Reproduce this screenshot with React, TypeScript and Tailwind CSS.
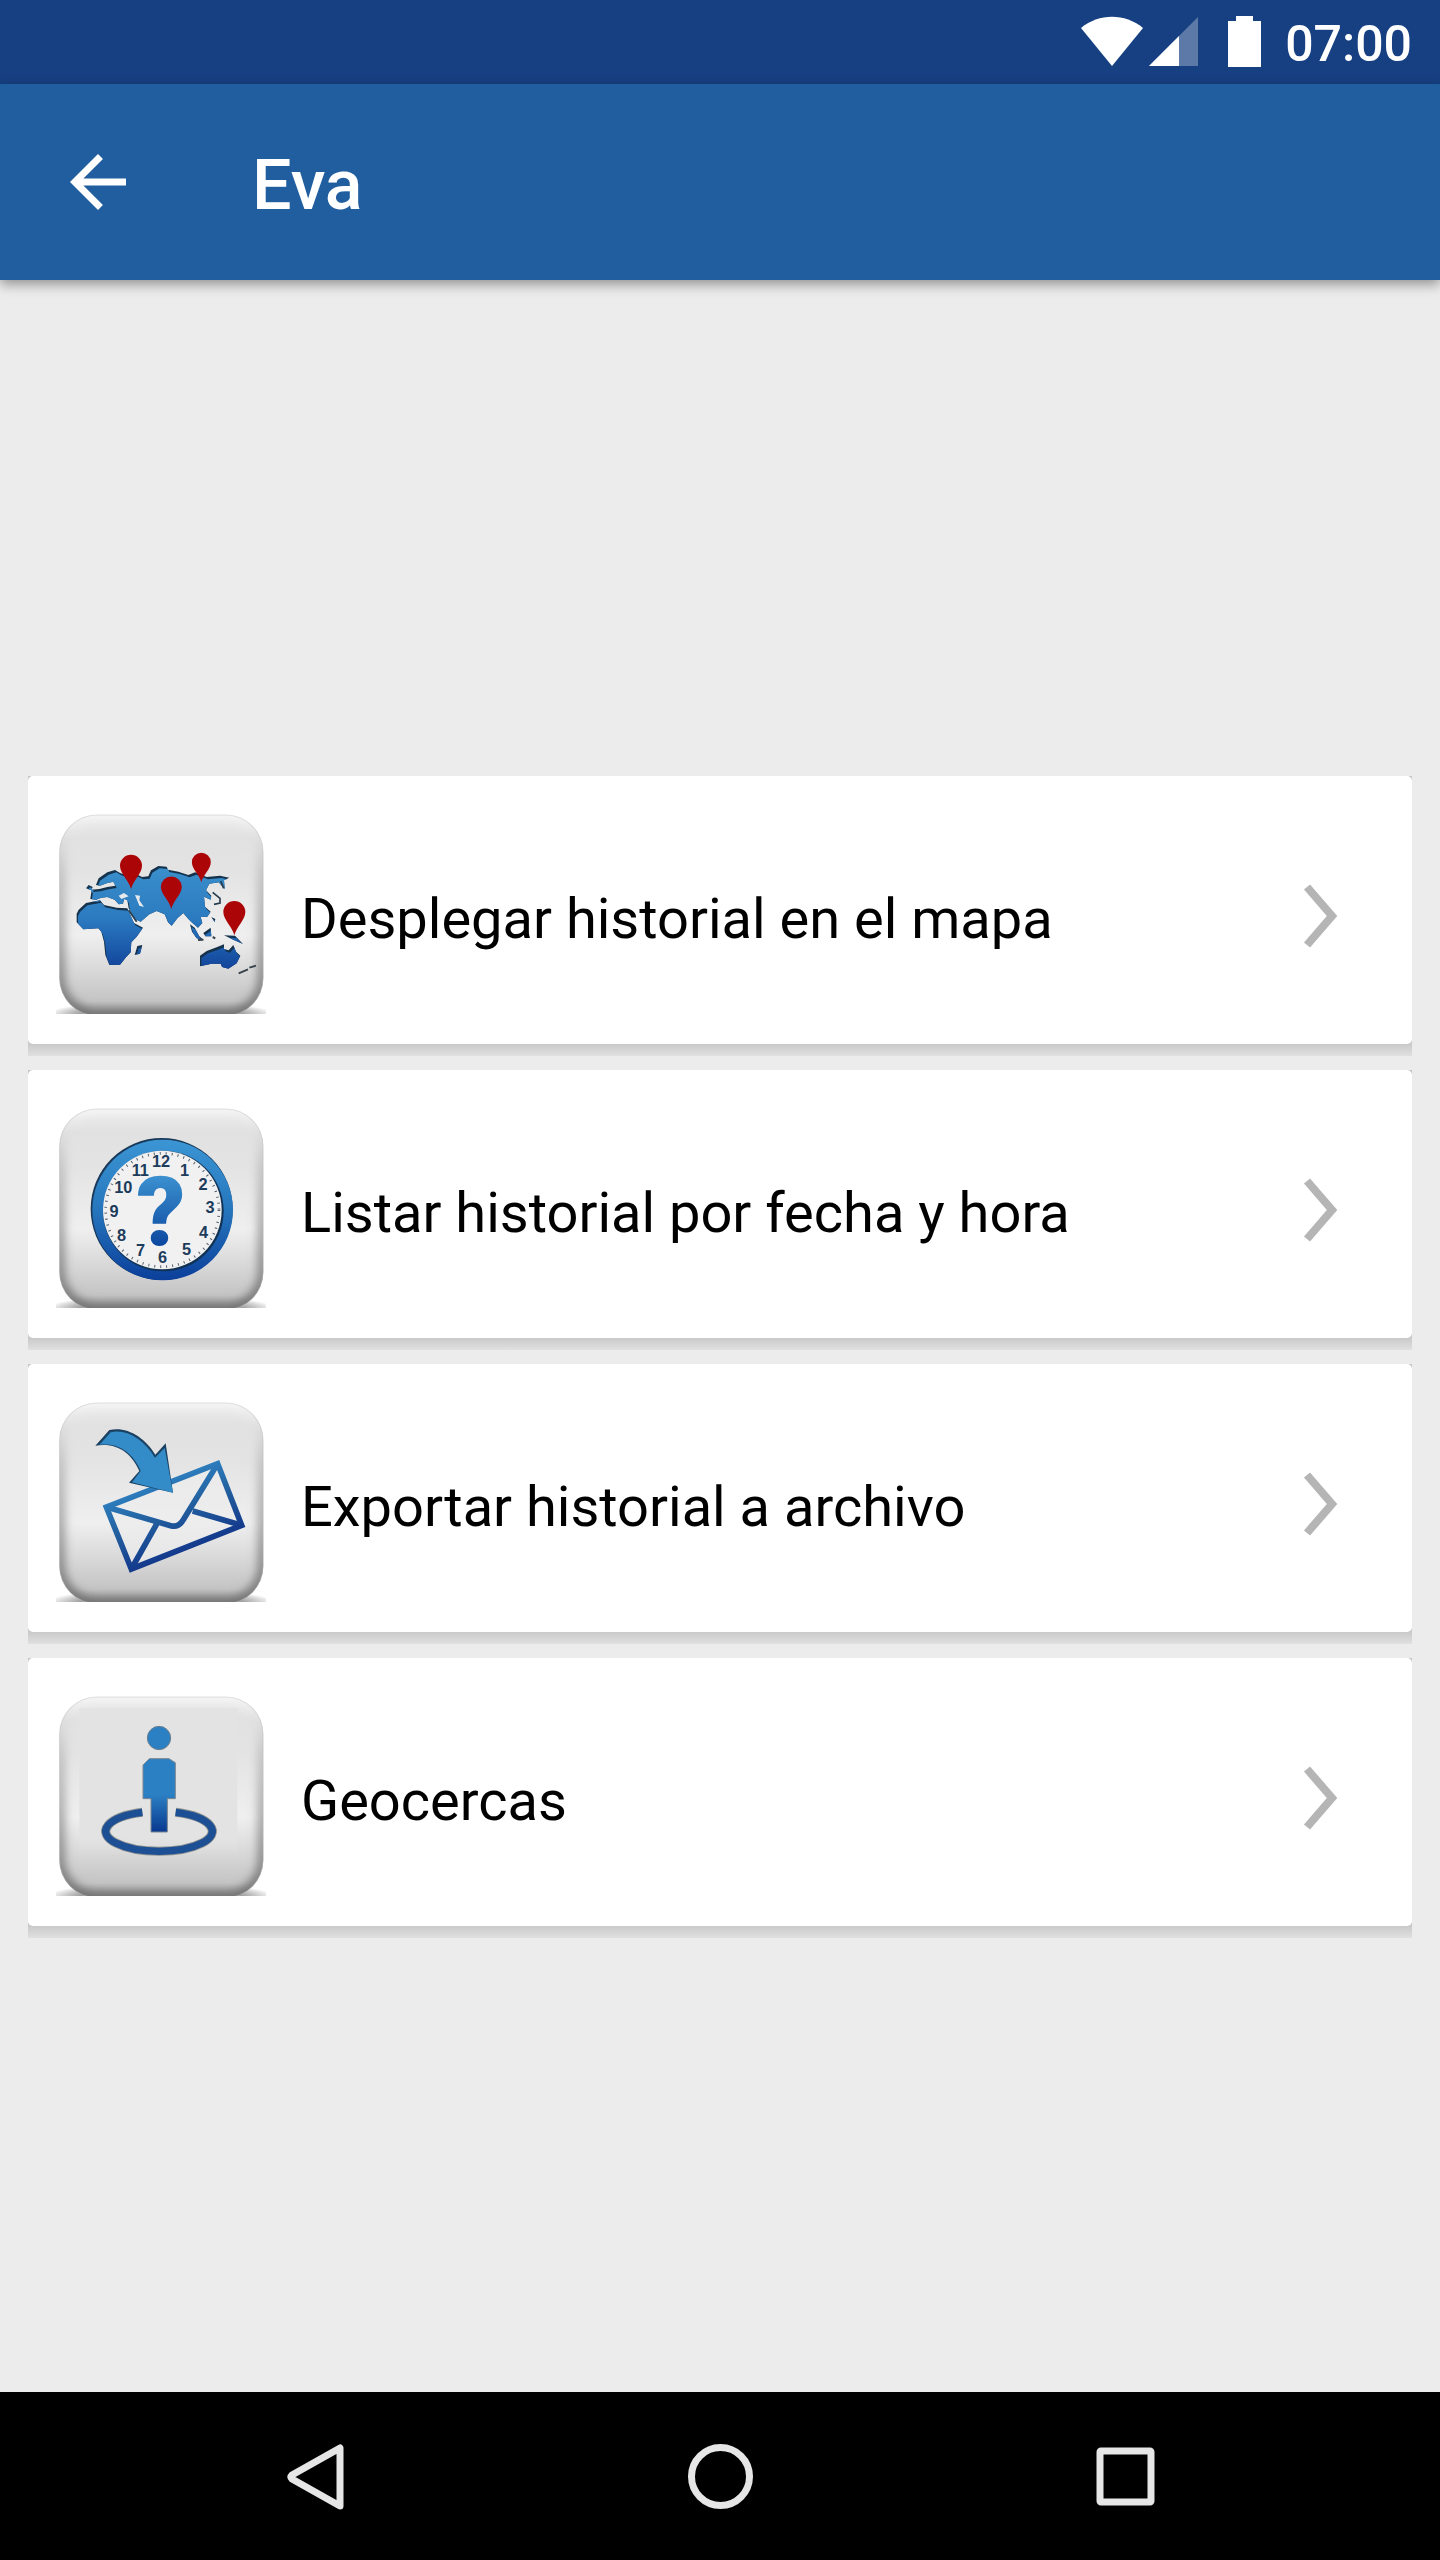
import type { ReactNode } from 'react';

// one pin, the tip is at 0,0
const Pin = ({ x, y, scale = 1 }: { x: number; y: number; scale?: number }) => (
    <path
        transform={`translate(${x} ${y}) scale(${scale})`}
        d="M0 0 C-6 -26 -33 -46 -33 -70 A33 33 0 1 1 33 -70 C33 -46 6 -26 0 0Z"
        fill="#ab0508"
    />
);

const land = [
    // europe + asia
    'M211 402 L215 374 L238 372 L262 366 L286 362 L280 350 L262 354 L240 362 L228 360 L236 340 L262 322 L285 315 L300 324 L318 330 L350 328 L366 336 L385 334 L393 316 L415 303 L440 305 L444 314 L475 320 L505 330 L525 322 L560 336 L600 332 L628 338 L612 346 L614 372 L596 352 L568 356 L558 376 L574 392 L572 404 L552 395 L555 425 L572 440 L562 455 L542 456 L547 474 L534 488 L515 472 L505 462 L490 444 L472 460 L455 482 L444 472 L434 448 L410 438 L388 448 L362 470 L345 462 L326 430 L322 405 L312 402 L309 416 L296 418 L284 404 L262 396 L244 398 L228 404 Z',
    // africa
    'M176 434 L198 414 L240 406 L252 420 L290 428 L322 430 L342 474 L369 488 L350 515 L334 532 L332 562 L318 577 L300 599 L268 600 L256 570 L252 530 L244 500 L235 490 L190 493 L170 472 L170 446 Z',
    'M352 543 L367 540 L360 566 L344 570 Z',
    // britain
    'M198 370 L206 360 L218 366 L214 376 Z',
    // australia
    'M540 572 L560 558 L590 547 L612 538 L612 552 L626 556 L640 540 L648 560 L661 572 L650 595 L625 611 L606 606 L602 596 L575 596 L540 604 Z',
    // islands
    'M510 478 L524 488 L538 514 L552 526 L530 520 L516 500 Z',
    'M550 504 L572 488 L574 514 L556 514 Z',
    'M574 456 L586 462 L584 472 Z',
    'M612 511 L645 512 L669 537 L640 524 Z',
].join(' ');

const WorldGlyph = () => (
    <g transform="translate(-108 -117)">
        <defs>
            <linearGradient id="worldBlue" gradientUnits="userSpaceOnUse" x1="0" y1="300" x2="0" y2="610">
                <stop offset="0" stopColor="#3a8fcb" />
                <stop offset="0.5" stopColor="#2b7ac0" />
                <stop offset="1" stopColor="#10429a" />
            </linearGradient>
            <clipPath id="worldClip"><path d={land} /></clipPath>
        </defs>
        <path d={land} fill="#14324c" />
        <g clipPath="url(#worldClip)">
            <path d={land} fill="url(#worldBlue)" transform="translate(4 7)" />
        </g>
        <path d="M345 390 L360 392 L358 406 L372 426 L358 422 Z M296 392 L312 384 L326 394 L304 402 Z" fill="#e6e9ec" />
        <path d="M326 436 L350 470 M578 382 L600 400 L600 414 L582 418 M602 348 L611 370" fill="none" stroke="#2a3d4e" strokeWidth="5" />
        <path d="M534 525 L550 524 M578 516 L586 520 M656 625 L684 613 M688 608 L708 602" fill="none" stroke="#3a444e" strokeWidth="6" />
        <Pin x={333} y={372} />
        <Pin x={544} y={352} scale={0.86} />
        <Pin x={454} y={432} scale={0.95} />
        <Pin x={643} y={511} />
    </g>
);

const clockNumbers: [string, number, number][] = [
    ['12', 363, 305], ['1', 434, 330], ['2', 489, 374], ['3', 510, 442],
    ['4', 491, 517], ['5', 440, 568], ['6', 368, 592], ['7', 302, 571],
    ['8', 245, 525], ['9', 222, 454], ['10', 250, 381], ['11', 301, 330],
];

const ClockGlyph = () => (
    <g transform="translate(-48 -114)">
        <defs>
            <linearGradient id="clockBlue" gradientUnits="userSpaceOnUse" x1="0" y1="240" x2="0" y2="660">
                <stop offset="0" stopColor="#3b95d3" />
                <stop offset="0.5" stopColor="#2676bd" />
                <stop offset="1" stopColor="#0b3f9b" />
            </linearGradient>
            <linearGradient id="questionBlue" gradientUnits="userSpaceOnUse" x1="0" y1="340" x2="0" y2="560">
                <stop offset="0" stopColor="#3d93d1" />
                <stop offset="1" stopColor="#0b469f" />
            </linearGradient>
        </defs>
        <circle cx="365" cy="447" r="213" fill="#18395a" />
        <circle cx="368" cy="450" r="211" fill="url(#clockBlue)" />
        <circle cx="370" cy="453" r="181" fill="#123254" />
        <circle cx="367" cy="450" r="178" fill="#f1f1f2" />
        <circle cx="367" cy="450" r="170" fill="none" stroke="#55606b" strokeWidth="8" strokeDasharray="3 15" />
        <g fontFamily="'Liberation Sans', sans-serif" fontWeight="700" fontSize="49" fill="#1d3c5c" textAnchor="middle">
            {clockNumbers.map(([n, x, y]) => <text key={n} x={x} y={y + 17}>{n}</text>)}
        </g>
        <text x="363" y="554" textAnchor="middle" fontFamily="Roboto, sans-serif" fontWeight="900" fontSize="288" fill="url(#questionBlue)">?</text>
    </g>
);

const MailGlyph = () => (
    <g transform="translate(-48 -126)">
        <defs>
            <linearGradient id="mailBlue" gradientUnits="userSpaceOnUse" x1="330" y1="360" x2="430" y2="620">
                <stop offset="0" stopColor="#318acb" />
                <stop offset="0.5" stopColor="#23609f" />
                <stop offset="1" stopColor="#12358a" />
            </linearGradient>
        </defs>
        <path d="M533 341 L605 526 L274 657 L199 471 Z" fill="#ececec" fillOpacity="0.7" stroke="url(#mailBlue)" strokeWidth="17" />
        <path d="M199 471 L392 527 Q416 534 430 509 L533 341 M350 522 L274 657 M458 483 L605 526" fill="none" stroke="url(#mailBlue)" strokeWidth="17" />
        <path d="M166 287 L208 240 C260 228 315 262 346 314 L377 280 L399 428 L267 398 L298 363 C275 310 232 276 166 287Z" fill="#1b4263" />
        <path d="M178 285 L212 247 C260 236 310 268 345 323 L374 294 L399 428 L276 397 L302 363 C280 310 236 276 178 285Z" fill="#338bc8" />
    </g>
);

const FenceGlyph = () => (
    <g transform="translate(-48 -138)">
        <defs>
            <linearGradient id="legBlue" gradientUnits="userSpaceOnUse" x1="0" y1="465" x2="0" y2="577">
                <stop offset="0" stopColor="#2b7fc3" />
                <stop offset="1" stopColor="#08388f" />
            </linearGradient>
            <linearGradient id="fenceFace" x1="0" y1="0" x2="0" y2="1">
                <stop offset="0.85" stopColor="#e3e3e3" />
                <stop offset="1" stopColor="#e3e3e3" stopOpacity="0" />
            </linearGradient>
        </defs>
        <rect x="118" y="205" width="474" height="440" fill="url(#fenceFace)" />
        <circle cx="357" cy="294" r="35" fill="#2b7fc3" stroke="#6d7f8c" strokeWidth="3" />
        <path d="M328 356 H387 L406 368 V476 H382 V576 H333 V476 H309 V375 Z" fill="url(#legBlue)" stroke="#7b8791" strokeWidth="3" />
        <path d="M307 517 A160 60 0 1 0 407 517" fill="none" stroke="#8b8f8f" strokeWidth="27" />
        <path d="M307 517 A160 60 0 1 0 407 517" fill="none" stroke="#1d4f94" strokeWidth="22" />
    </g>
);

// gradients shared by all the tiles
const TileDefs = () => (
    <svg className="absolute h-0 w-0" aria-hidden="true">
        <defs>
            <linearGradient id="tileFace" x1="0" y1="0" x2="0" y2="1">
                <stop offset="0" stopColor="#ececec" />
                <stop offset="0.12" stopColor="#e1e1e1" />
                <stop offset="0.3" stopColor="#e4e4e4" />
                <stop offset="0.6" stopColor="#efefef" />
                <stop offset="0.75" stopColor="#dcdcdc" />
                <stop offset="0.93" stopColor="#c4c4c4" />
                <stop offset="1" stopColor="#949494" />
            </linearGradient>
            <linearGradient id="tileEdge" x1="0" y1="0" x2="0" y2="1">
                <stop offset="0" stopColor="#ffffff" stopOpacity="0.6" />
                <stop offset="0.3" stopColor="#a8a8a8" stopOpacity="0.6" />
                <stop offset="1" stopColor="#6e6e6e" />
            </linearGradient>
            <radialGradient id="tileGround">
                <stop offset="0.7" stopColor="#a0a0a0" />
                <stop offset="1" stopColor="#a0a0a0" stopOpacity="0" />
            </radialGradient>
            <filter id="tileSoft" x="-10%" y="-10%" width="120%" height="120%"><feGaussianBlur stdDeviation="14" /></filter>
            <clipPath id="tileClip"><rect x="10" y="32" width="612" height="602" rx="112" /></clipPath>
        </defs>
    </svg>
);

const Tile = ({ children }: { children: ReactNode }) => (
    <svg viewBox="0 0 630 630" className="size-[210px] shrink-0" aria-hidden="true">
        <ellipse cx="315" cy="632" rx="345" ry="42" fill="url(#tileGround)" />
        <g clipPath="url(#tileClip)">
            <rect x="10" y="32" width="612" height="602" fill="url(#tileFace)" />
            <rect x="10" y="32" width="612" height="602" rx="112" fill="none" stroke="url(#tileEdge)" strokeWidth="34" filter="url(#tileSoft)" />
        </g>
        <rect x="11" y="33" width="610" height="602" rx="112" fill="none" stroke="#bcbcbc" strokeOpacity="0.4" strokeWidth="3" />
        {children}
    </svg>
);

const options = [
    { id: 'mapa', label: 'Desplegar historial en el mapa', glyph: <WorldGlyph /> },
    { id: 'lista', label: 'Listar historial por fecha y hora', glyph: <ClockGlyph /> },
    { id: 'exportar', label: 'Exportar historial a archivo', glyph: <MailGlyph /> },
    { id: 'geocercas', label: 'Geocercas', glyph: <FenceGlyph /> },
];

const OptionRow = ({ id, label, glyph }: { id: string; label: string; glyph: ReactNode }) => (
    <li className="bg-linear-to-b from-[#c6c6c6] from-95% to-[#e0e0e0] pb-3">
        <a href={'#' + id} className="flex rounded-[5px] bg-white pt-7 pr-[70px] pb-[30px] pl-7">
            <Tile>{glyph}</Tile>
            <span className="flex flex-1 items-center pt-4 pl-[35px]">
                <span className="flex-1 pt-1 text-[56px] leading-[66px] text-black">{label}</span>
                <svg viewBox="0 0 44 66" className="h-[66px] w-11 shrink-0" fill="none" stroke="#b5b5b5" strokeWidth="8" aria-hidden="true">
                    <path d="M9 3 L34 32 L9 61" />
                </svg>
            </span>
        </a>
    </li>
);

const StatusBar = () => (
    <div className="flex h-[84px] items-center justify-end bg-[#174083] pr-7 text-white">
        <svg viewBox="0 0 182 52" className="h-[52px] w-[182px]" fill="currentColor" aria-hidden="true">
            <path d="M0 12 C18 -3 44 -3 62 12 L31 50 Z" />
            <path d="M68 50 L117 1 V50 Z" fillOpacity="0.3" />
            <path d="M68 50 L98 20 V50 Z" />
            <path d="M147 5 H155 V0 H172 V5 H180 V51 H147 Z" />
        </svg>
        <time className="pt-1 pl-[22px] text-[50px] leading-[58px] font-medium">07:00</time>
    </div>
);

const NavBar = () => (
    <nav className="flex h-[168px] bg-black px-28 text-[#e6e6e6]">
        <button aria-label="Atrás" className="flex flex-1 items-center justify-center">
            <svg viewBox="0 0 70 70" className="size-[70px]" fill="none" stroke="currentColor" strokeWidth="7" strokeLinejoin="round">
                <path d="M60 7 V65 L12 38 Q10 36 12 34 Z" />
            </svg>
        </button>
        <button aria-label="Inicio" className="flex flex-1 items-center justify-center">
            <svg viewBox="0 0 70 70" className="size-[70px]" fill="none" stroke="currentColor" strokeWidth="7">
                <circle cx="35.5" cy="35.5" r="29" />
            </svg>
        </button>
        <button aria-label="Recientes" className="flex flex-1 items-center justify-center">
            <svg viewBox="0 0 70 70" className="size-[70px]" fill="none" stroke="currentColor" strokeWidth="7">
                <rect x="10" y="10" width="51" height="51" rx="1" />
            </svg>
        </button>
    </nav>
);

export default function App() {
    return <div className="flex min-h-screen flex-col bg-[#ececec] font-['Roboto',sans-serif]">
        <TileDefs />
        <StatusBar />
        <header className="flex h-[196px] items-center bg-[#215e9f] px-14 text-white shadow-[0_4px_12px_rgba(0,0,0,0.4)]">
            <button aria-label="Volver">
                <svg viewBox="0 0 24 24" className="size-[84px]" fill="currentColor">
                    <path d="M20 11H7.83l5.59-5.59L12 4l-8 8 8 8 1.41-1.41L7.83 13H20v-2z" />
                </svg>
            </button>
            <h1 className="pt-1.5 pl-28 text-[70px] leading-[82px] font-medium">Eva</h1>
        </header>
        <main className="flex flex-1 flex-col justify-center px-7 pt-[42px]">
            <ul className="flex flex-col gap-3.5">
                {options.map(o => <OptionRow key={o.id} {...o} />)}
            </ul>
        </main>
        <NavBar />
    </div>
}
